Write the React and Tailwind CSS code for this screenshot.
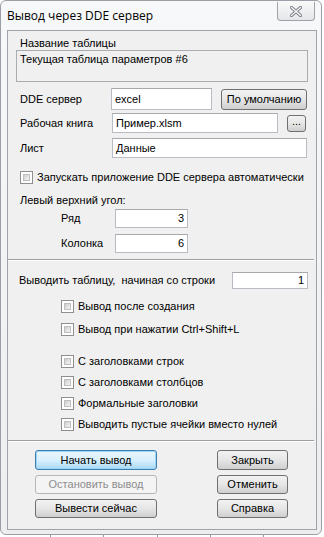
import React from 'react';

const ui = { fontFamily: '"Liberation Sans", Arial, sans-serif' };
const title = { fontFamily: '"Open Sans", "Noto Sans", sans-serif' };

const Input = ({ value = '', className = '', right = false }) => (
  <div
    className={`h-full bg-white border border-[#b9bcc2] border-t-[#a6a9ae] flex items-center px-[3px] text-[11px] text-black whitespace-nowrap ${
      right ? 'justify-end' : ''
    } ${className}`}
  >
    {value}
  </div>
);

const Check = () => (
  <div className="w-[13px] h-[13px] border border-[#8f8f8f] bg-white p-[2px] shrink-0">
    <div className="w-full h-full bg-gradient-to-br from-[#cfcfcf] to-[#f4f4f4] border border-[#bfbfbf]"></div>
  </div>
);

const CheckRow = ({ label, className = '' }) => (
  <div className={`h-[14px] flex items-center whitespace-nowrap ${className}`}>
    <Check />
    <span className="ml-[4px] text-[11px] leading-none">{label}</span>
  </div>
);

const Button = ({ children, className = '', variant = 'normal' }) => {
  const styles = {
    normal:
      'border-[#707070] bg-gradient-to-b from-[#f2f2f2] via-[#e6e6e6] to-[#cfcfcf] text-black',
    default:
      'border-[#3c7fb1] bg-gradient-to-b from-[#eaf6fd] via-[#d9f0fc] to-[#a7d9f5] text-black shadow-[inset_0_0_0_1px_#9ed4f4]',
    disabled: 'border-[#b5b8bb] bg-[#f4f4f4] text-[#8d8d8d]',
  };
  return (
    <div
      className={`border rounded-[3px] flex items-center justify-center text-[11px] whitespace-nowrap ${styles[variant]} ${className}`}
    >
      {children}
    </div>
  );
};

export default function App() {
  return (
    <div className="w-[324px] h-[537px] bg-white overflow-hidden flex flex-col" style={ui}>
      <div className="w-[322px] h-[535px] shrink-0 rounded-[6px] border border-[#9a9fa5] bg-gradient-to-b from-[#f7f8f9] to-[#eceef0]">
        {/* title bar */}
        <div className="h-[29px] flex items-start">
          <div className="pl-[6px] pt-[6px] text-[12px] text-black whitespace-nowrap" style={title}>
            Вывод через DDE сервер
          </div>
          <div className="ml-auto mr-[6px] w-[38px] h-[19px] mt-[1px] border border-t-0 border-[#9ea3a8] rounded-b-[4px] bg-gradient-to-b from-[#f9f9f9] to-[#e4e6e9] flex items-center justify-center">
            <svg width="12" height="11" viewBox="0 0 12 11">
              <path
                d="M1.5 1.5 L10.5 9.5 M10.5 1.5 L1.5 9.5"
                stroke="#7d8086"
                strokeWidth="3.2"
                strokeLinecap="square"
              />
              <path
                d="M1.5 1.5 L10.5 9.5 M10.5 1.5 L1.5 9.5"
                stroke="#ffffff"
                strokeWidth="1.2"
                strokeLinecap="square"
              />
            </svg>
          </div>
        </div>

        {/* client area */}
        <div className="ml-[6px] w-[310px] h-[500px] border border-[#a0a4a9] bg-[#f0f0f0] flex flex-col text-black">
          <div className="mt-[5px] h-[14px] pl-[12px] text-[11px] leading-[14px]">Название таблицы</div>
          <div className="ml-[8px] w-[292px] h-[32px] border border-[#a9acb0] bg-[#f0f0f0] px-[3px] text-[11px] leading-[16px]">
            Текущая таблица параметров #6
          </div>

          <div className="mt-[6px] h-[22px] flex items-center">
            <span className="ml-[12px] w-[91px] text-[11px]">DDE сервер</span>
            <Input value="excel" className="w-[101px]" />
            <Button className="ml-[9px] w-[86px] h-[21px]">По умолчанию</Button>
          </div>

          <div className="mt-[3px] h-[20px] flex items-center">
            <span className="ml-[12px] w-[92px] text-[11px]">Рабочая книга</span>
            <Input value="Пример.xlsm" className="w-[166px]" />
            <Button className="ml-[9px] w-[19px] h-[17px] text-[10px] leading-none pb-[3px]">...</Button>
          </div>

          <div className="mt-[5px] h-[20px] flex items-center">
            <span className="ml-[12px] w-[92px] text-[11px]">Лист</span>
            <Input value="Данные" className="w-[195px]" />
          </div>

          <CheckRow
            className="mt-[12px] ml-[12px]"
            label="Запускать приложение DDE сервера автоматически"
          />

          <div className="mt-[9px] h-[14px] pl-[12px] text-[11px] leading-[14px]">Левый верхний угол:</div>

          <div className="mt-[2px] h-[19px] flex items-center">
            <span className="ml-[53px] w-[54px] text-[11px]">Ряд</span>
            <Input value="3" right className="w-[73px]" />
          </div>
          <div className="mt-[6px] h-[19px] flex items-center">
            <span className="ml-[53px] w-[54px] text-[11px]">Колонка</span>
            <Input value="6" right className="w-[73px]" />
          </div>

          <div className="mt-[6px] mr-[2px] h-[2px] border-t border-[#a0a0a0] border-b border-b-white"></div>

          <div className="mt-[11px] h-[17px] flex items-center">
            <span className="ml-[11px] w-[213px] text-[11px] whitespace-nowrap">Выводить таблицу,&nbsp; начиная со строки</span>
            <Input value="1" right className="w-[76px]" />
          </div>

          <CheckRow className="mt-[10px] ml-[53px]" label="Вывод после создания" />
          <CheckRow className="mt-[9px] ml-[53px]" label="Вывод при нажатии Ctrl+Shift+L" />
          <CheckRow className="mt-[18px] ml-[53px]" label="С заголовками строк" />
          <CheckRow className="mt-[7px] ml-[53px]" label="С заголовками столбцов" />
          <CheckRow className="mt-[7px] ml-[53px]" label="Формальные заголовки" />
          <CheckRow className="mt-[7px] ml-[53px]" label="Выводить пустые ячейки вместо нулей" />

          <div className="mt-[9px] mr-[2px] h-[2px] border-t border-[#a0a0a0] border-b border-b-white"></div>

          <div className="mt-[8px] flex">
            <div className="ml-[27px] w-[122px] flex flex-col gap-[5px]">
              <Button variant="default" className="h-[20px]">Начать вывод</Button>
              <Button variant="disabled" className="h-[19px]">Остановить вывод</Button>
              <Button className="h-[19px]">Вывести сейчас</Button>
            </div>
            <div className="ml-[60px] w-[71px] flex flex-col gap-[5px]">
              <Button className="h-[20px]">Закрыть</Button>
              <Button className="h-[19px]">Отменить</Button>
              <Button className="h-[19px]">Справка</Button>
            </div>
          </div>
        </div>
      </div>

      {/* spreadsheet grid peeking out below the window */}
      <div className="h-[2px] flex">
        <div className="w-[50px]"></div>
        <div className="w-[53px] border-l border-[#9a9a9a]"></div>
        <div className="w-[54px] border-l border-[#9a9a9a]"></div>
        <div className="w-[53px] border-l border-[#9a9a9a]"></div>
        <div className="w-[53px] border-l border-[#9a9a9a]"></div>
        <div className="w-[50px] border-l border-[#9a9a9a]"></div>
      </div>
    </div>
  );
}
